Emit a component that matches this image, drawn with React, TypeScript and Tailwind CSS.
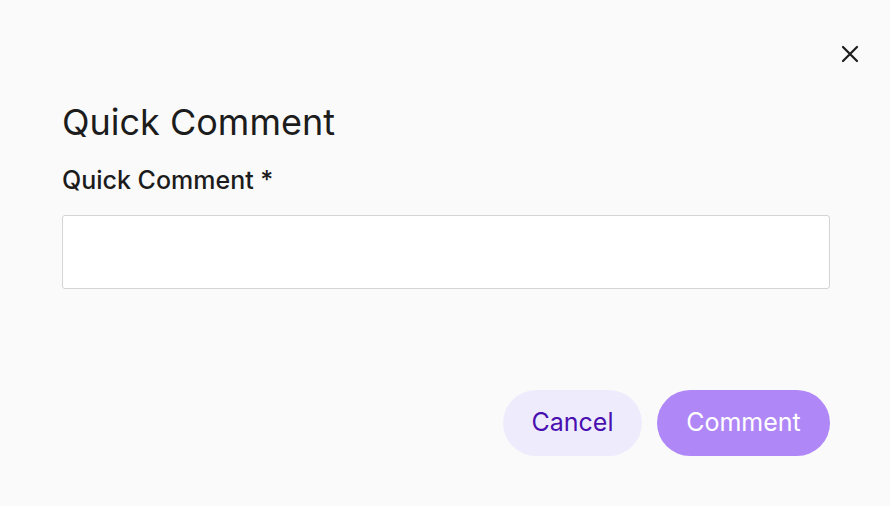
import React from "react";

export default function App() {
  return (
    <div className="w-[890px] h-[506px] bg-[#fafafa] relative" style={{ fontFamily: "Inter, 'Noto Sans', sans-serif" }}>
      <button className="absolute left-[838px] top-[42px] w-[24px] h-[24px] flex items-center justify-center text-[#1c1c1c]">
        <svg width="20" height="20" viewBox="0 0 20 20" fill="none" stroke="currentColor" strokeWidth="2.2" strokeLinecap="round">
          <path d="M3 3 L17 17 M17 3 L3 17" />
        </svg>
      </button>
      <div className="flex flex-col pl-[62px] pr-[60px] pt-[98px]">
        <h1 className="text-[36px] leading-[48px] text-[#1c1c1c] font-normal">Quick Comment</h1>
        <label className="mt-[18px] text-[25px] leading-[32px] font-medium text-[#1c1c1c]">Quick Comment *</label>
        <input className="mt-[19px] h-[74px] w-full bg-white border border-[#d4d4d4] rounded-[3px] outline-none px-4" />
        <div className="flex justify-end gap-[15px] mt-[101px]">
          <button className="h-[66px] w-[139px] rounded-full bg-[#eeecfc] text-[#4a0fb0] text-[25px]">Cancel</button>
          <button className="h-[66px] w-[173px] rounded-full bg-[#b087f7] text-white text-[25px]">Comment</button>
        </div>
      </div>
    </div>
  );
}
